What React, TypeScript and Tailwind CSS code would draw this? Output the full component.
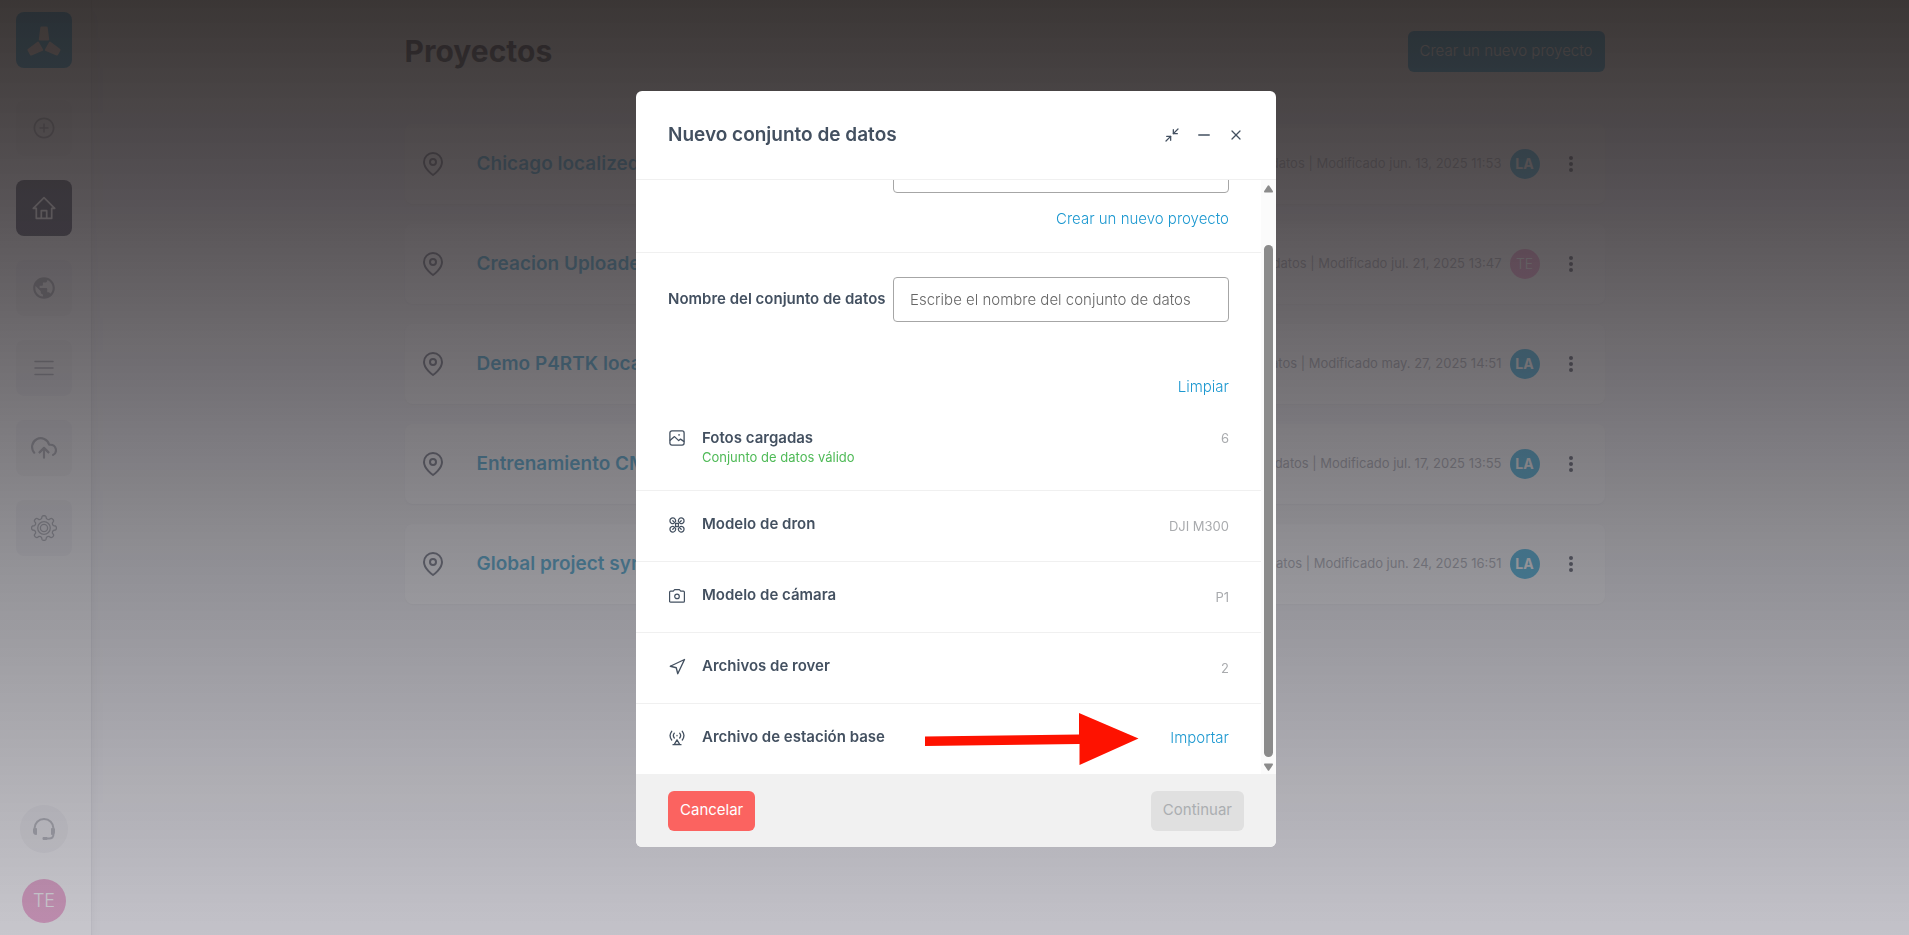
import type { ReactNode } from "react";
import { Minimize2, Minus, X } from "lucide-react";
import { AiOutlinePlusCircle } from "react-icons/ai";
import { FiMapPin, FiNavigation, FiUploadCloud } from "react-icons/fi";
import { MdPublic } from "react-icons/md";

const projects = [
  { name: "Chicago localized", date: "jun. 13, 2025 11:53", user: "LA" },
  { name: "Creacion Uploader", date: "jul. 21, 2025 13:47", user: "TE" },
  { name: "Demo P4RTK localized", date: "may. 27, 2025 14:51", user: "LA" },
  { name: "Entrenamiento CM", date: "jul. 17, 2025 13:55", user: "LA" },
  { name: "Global project sync", date: "jun. 24, 2025 16:51", user: "LA" },
];

// eight rounded teeth around a 13,13 centre
const gearPath =
  Array.from({ length: 8 }, (_, i) => {
    const at = (deg: number, r: number) => {
      const a = ((i * 45 + deg - 90) * Math.PI) / 180;
      return `${(13 + r * Math.cos(a)).toFixed(2)} ${(13 + r * Math.sin(a)).toFixed(2)}`;
    };
    return `${i === 0 ? "M" : "L"}${at(-14, 9.8)} L${at(-10, 11.6)} Q${at(-8, 12.5)} ${at(0, 12.4)} Q${at(8, 12.5)} ${at(10, 11.6)} L${at(14, 9.8)} Q${at(22.5, 8.8)} ${at(31, 9.8)}`;
  }).join(" ") + "Z";

function Logo() {
  const blade = "M13.500.5h5q1 0 1.200 1l1.500 12q0 1-1 1h-8.400q-1 0-1-1l1.500-12q.2-1 1.200-1Z";
  return (
    <svg width="32" height="28" viewBox="0 0 32 28" fill="#f3dfd6" overflow="visible" aria-hidden="true">
      <path d={blade} />
      <path d={blade} transform="rotate(120 16 18)" />
      <path d={blade} transform="rotate(240 16 18)" />
    </svg>
  );
}

function HomeIcon() {
  return (
    <svg width="24" height="24" viewBox="0 0 24 24" fill="none" stroke="currentColor" strokeWidth="1.700" strokeLinejoin="round" aria-hidden="true">
      <path d="M12 1.700 1.300 12.300h3v10h15.400v-10h3Z" />
      <path d="M9.300 22.300v-7.600h5.400v7.600" />
    </svg>
  );
}

function ListIcon() {
  return (
    <svg width="20" height="16" viewBox="0 0 20 16" fill="none" stroke="currentColor" strokeWidth="1.500" strokeLinecap="round" aria-hidden="true">
      <path d="M1 1.500h18M1 8h18M1 14.500h18" />
    </svg>
  );
}

function GearIcon() {
  return (
    <svg width="26" height="26" viewBox="0 0 26 26" fill="none" stroke="currentColor" strokeWidth="1.300" strokeLinejoin="round" aria-hidden="true">
      <path d={gearPath} />
      <circle cx="13" cy="13" r="6.300" />
      <circle cx="13" cy="13" r="3.600" />
    </svg>
  );
}

function HeadsetIcon() {
  return (
    <svg width="24" height="24" viewBox="0 0 24 24" fill="none" stroke="currentColor" strokeWidth="2" aria-hidden="true">
      <path d="M2.500 14v-2.500a9.500 9.500 0 0 1 19 0V17q0 4.500-4.500 4.500h-3" />
      <path d="M2 11.500h2.500v6H4q-2.500 0-2.500-2.500v-3ZM22 11.500h-2.500v6h.5q2.500 0 2.500-2.500v-3ZM11 20.500h4v2h-4Z" fill="currentColor" strokeWidth="1" />
    </svg>
  );
}

function PhotoIcon() {
  return (
    <svg width="16" height="16" viewBox="0 0 16 16" fill="none" stroke="currentColor" strokeWidth="1.300" strokeLinecap="round" strokeLinejoin="round" aria-hidden="true">
      <rect x="0.900" y="0.900" width="14.200" height="14.200" rx="2" />
      <path d="m1.200 10.200 4.300-3.600 4.200 4 1.800-1.500 3.300 2.300" />
      <path d="M9.700 4.900h.8" />
    </svg>
  );
}

function DroneIcon() {
  return (
    <svg width="16" height="16" viewBox="0 0 16 16" fill="none" stroke="currentColor" strokeWidth="1.300" strokeLinecap="round" strokeLinejoin="round" aria-hidden="true">
      <path d="M6.500 4.700A2.850 2.850 0 1 0 4.700 6.500M9.500 4.700A2.850 2.850 0 1 1 11.300 6.500M6.500 11.300A2.850 2.850 0 1 1 4.700 9.500M9.500 11.300A2.850 2.850 0 1 0 11.300 9.500" />
      <path d="m3.800 3.800 2.600 2.600h3.200l2.600-2.600M3.800 12.200l2.600-2.600h3.200l2.600 2.600M6.400 6.400q.6 1.600 0 3.200M9.600 6.400q-.6 1.600 0 3.200" />
    </svg>
  );
}

function CameraIcon() {
  return (
    <svg width="16" height="16" viewBox="0 0 16 16" fill="none" stroke="currentColor" strokeWidth="1.200" strokeLinejoin="round" aria-hidden="true">
      <path d="M1.600 3.200h2.700L5.600 1.700h4.800l1.300 1.500h2.700q1 0 1 1v9q0 1-1 1H1.600q-1 0-1-1v-9q0-1 1-1Z" />
      <circle cx="8" cy="8.400" r="2.300" />
    </svg>
  );
}

function AntennaIcon() {
  return (
    <svg width="16" height="16" viewBox="0 0 16 16" fill="none" stroke="currentColor" strokeWidth="1.300" strokeLinecap="round" strokeLinejoin="round" aria-hidden="true">
      <path d="M2.700 1.300Q-.6 5.500 2.700 10M5.300 3.200Q3.400 5.600 5.300 8M13.300 1.300q3.300 4.200 0 8.700M10.700 3.200q1.900 2.400 0 4.800" />
      <path d="M8 5.500v.3M8 9.800l-2.800 4.700h5.600ZM4 14.700h8" />
    </svg>
  );
}

function SideButton({ label, active, children }: { label: string; active?: boolean; children: ReactNode }) {
  return (
    <button
      type="button"
      aria-label={label}
      className={`flex size-14 items-center justify-center rounded-lg ${active ? "bg-[#1b2036] text-white" : "bg-[#f3f3f5] text-[#94979e]"}`}
    >
      {children}
    </button>
  );
}

function Sidebar() {
  return (
    <aside className="z-10 flex w-[92px] shrink-0 flex-col items-center border-r border-[#e2e2e6] bg-white pt-3 pr-[3px] pb-3 shadow-lg">
      <a href="#" aria-label="Inicio" className="mb-8 flex size-14 items-center justify-center rounded-lg bg-[#0f96d4]">
        <Logo />
      </a>
      <nav className="flex flex-col gap-6">
        <SideButton label="Crear">
          <AiOutlinePlusCircle size={24} />
        </SideButton>
        <SideButton label="Proyectos" active>
          <HomeIcon />
        </SideButton>
        <SideButton label="Mapa">
          <MdPublic size={26} />
        </SideButton>
        <SideButton label="Lista">
          <ListIcon />
        </SideButton>
        <SideButton label="Subir">
          <FiUploadCloud size={26} />
        </SideButton>
        <SideButton label="Ajustes">
          <GearIcon />
        </SideButton>
      </nav>
      <button type="button" aria-label="Soporte" className="mt-auto flex size-12 items-center justify-center rounded-full bg-[#f3f3f5] text-[#a4a6ac]">
        <HeadsetIcon />
      </button>
      <button type="button" className="mt-[26px] size-11 rounded-full bg-[#ea8cc2] text-lg font-light text-white">
        TE
      </button>
    </aside>
  );
}

function Projects() {
  return (
    <main className="flex-1 bg-[#f7f7f9] pt-[31px] pl-2">
      <div className="mx-auto max-w-[1200px]">
        <header className="mb-[52px] flex h-[41px] items-center justify-between">
          <h1 className="text-[30px] font-bold text-[#1e1f2d]">Proyectos</h1>
          <button type="button" className="h-full rounded-md bg-[#0f96d4] px-3 text-[15px] font-light text-white">
            Crear un nuevo proyecto
          </button>
        </header>
        <ul className="flex flex-col gap-5">
          {projects.map((p) => (
            <li key={p.name} className="flex h-20 items-center rounded-lg bg-white pr-6 pl-4 shadow-xs">
              <FiMapPin size={24} className="text-[#4a4f5e]" />
              <a href="#" className="ml-8 text-[19px] font-semibold text-[#1795c8]">
                {p.name}
              </a>
              <span className="ml-auto text-[13px] text-[#96989f]">1 conjunto de datos | Modificado {p.date}</span>
              <span
                className={`ml-2 flex size-[30px] items-center justify-center rounded-full text-sm text-white ${p.user === "LA" ? "bg-[#14a0d6] font-bold" : "bg-[#ea8cc2] font-light"}`}
              >
                {p.user}
              </span>
              <button type="button" aria-label="Opciones" className="ml-[21px] flex w-5 flex-col items-center gap-0.5 text-[#2c3140]">
                <span className="size-1 rounded-full bg-current" />
                <span className="size-1 rounded-full bg-current" />
                <span className="size-1 rounded-full bg-current" />
              </button>
            </li>
          ))}
        </ul>
      </div>
    </main>
  );
}

function Row({ icon, title, children }: { icon: ReactNode; title: string; children: ReactNode }) {
  return (
    <div className="relative flex h-[71px] shrink-0 items-center border-t border-[#f0f0f0] px-8 pb-[3px]">
      <div className="flex w-[18px] justify-center">{icon}</div>
      <h3 className="ml-4 text-[15px] font-semibold">{title}</h3>
      <div className="ml-auto">{children}</div>
    </div>
  );
}

function Arrow() {
  return (
    <svg width="214" height="53" viewBox="0 0 214 53" className="absolute top-[9px] left-[289px]" aria-hidden="true">
      <path d="M0 23.500 154 21.500V0l59.500 25.500L154.500 52V31L0 33Z" fill="#fe1200" />
    </svg>
  );
}

function Scrollbar() {
  return (
    <div aria-hidden="true" className="flex w-[15px] shrink-0 flex-col items-center bg-[#fbfbfb] pt-[5px] pb-[3px] text-[#8b8b8b]">
      <svg width="9" height="8" viewBox="0 0 9 8" fill="currentColor">
        <path d="M3.700.8q.8-1 1.600 0L8.800 6q.5 1.200-.5 1.400H.7Q-.3 7.200.2 6Z" />
      </svg>
      <div className="mt-[52px] mb-1.5 w-[9px] flex-1 rounded-full bg-[#8b8b8b]" />
      <svg width="9" height="8" viewBox="0 0 9 8" fill="currentColor">
        <path d="M3.700 7.200q.8 1 1.600 0L8.800 2q.5-1.200-.5-1.400H.7Q-.3.8.2 2Z" />
      </svg>
    </div>
  );
}

function DatasetModal() {
  return (
    <section role="dialog" aria-modal="true" aria-labelledby="modal-title" className="flex w-full max-w-[640px] flex-col overflow-hidden rounded-md bg-white text-[#435060]">
      <header className="flex h-[89px] items-center border-b border-[#f0f0f0] px-8">
        <h2 id="modal-title" className="text-[19px] font-semibold">
          Nuevo conjunto de datos
        </h2>
        <div className="ml-auto flex gap-4">
          <button type="button" aria-label="Contraer" className="flex size-4 items-center justify-center">
            <Minimize2 size={16} strokeWidth={1.9} className="shrink-0" />
          </button>
          <button type="button" aria-label="Minimizar" className="flex size-4 items-center justify-center">
            <Minus size={18} strokeWidth={1.8} className="shrink-0" />
          </button>
          <button type="button" aria-label="Cerrar" className="flex size-4 items-center justify-center">
            <X size={16} strokeWidth={1.9} className="shrink-0" />
          </button>
        </div>
      </header>

      <div className="flex h-[594px]">
        <div className="flex min-w-0 flex-1 flex-col justify-end overflow-hidden">
          <div className="flex shrink-0 flex-col items-end border-b border-[#f0f0f0] px-8 pb-[21px]">
            <select aria-label="Proyecto" className="h-[45px] w-[336px] appearance-none rounded-sm border border-[#a6a6a6] bg-white px-4" />
            <a href="#" className="mt-3.5 text-[15px] leading-6 font-light text-[#1c98d0]">
              Crear un nuevo proyecto
            </a>
          </div>
          <div className="mt-6 flex shrink-0 items-center justify-between px-8">
            <label htmlFor="dataset-name" className="text-[15px] font-semibold whitespace-nowrap">
              Nombre del conjunto de datos
            </label>
            <input
              id="dataset-name"
              type="text"
              placeholder="Escribe el nombre del conjunto de datos"
              className="h-[45px] w-[336px] shrink-0 rounded-sm border border-[#a6a6a6] px-4 text-[15px] font-light placeholder:text-[#666666]"
            />
          </div>
          <div className="mt-[53px] flex shrink-0 justify-end px-8">
            <button type="button" className="text-[15px] leading-6 font-light text-[#1c98d0]">
              Limpiar
            </button>
          </div>
          <div className="flex h-[91px] shrink-0 items-start px-8 pt-[29px]">
            <div className="mt-0.5 flex w-[18px] justify-center">
              <PhotoIcon />
            </div>
            <div className="ml-4">
              <h3 className="text-[15px] leading-5 font-semibold">Fotos cargadas</h3>
              <p className="text-[13px] leading-[18px] text-[#4fba57]">Conjunto de datos válido</p>
            </div>
            <span className="ml-auto text-[13px] leading-5 text-[#a9abae]">6</span>
          </div>
          <Row icon={<DroneIcon />} title="Modelo de dron">
            <span className="text-[13px] text-[#a9abae]">DJI M300</span>
          </Row>
          <Row icon={<CameraIcon />} title="Modelo de cámara">
            <span className="text-[13px] text-[#a9abae]">P1</span>
          </Row>
          <Row icon={<FiNavigation size={18} strokeWidth={1.8} />} title="Archivos de rover">
            <span className="text-[13px] text-[#a9abae]">2</span>
          </Row>
          <Row icon={<AntennaIcon />} title="Archivo de estación base">
            <button type="button" className="text-[15px] font-light text-[#1c98d0]">
              Importar
            </button>
            <Arrow />
          </Row>
        </div>
        <Scrollbar />
      </div>

      <footer className="flex h-[73px] items-center justify-between bg-[#f1f1f1] px-8">
        <button type="button" className="h-10 rounded-md bg-[#fb6360] px-3 text-[15px] text-white">
          Cancelar
        </button>
        <button type="button" disabled className="h-10 rounded-md bg-[#e0e0e0] px-3 text-[15px] text-[#abaeb1]">
          Continuar
        </button>
      </footer>
    </section>
  );
}

export default function App() {
  return (
    <div className="relative flex min-h-screen font-['Inter',sans-serif]">
      <Sidebar />
      <Projects />
      <div className="fixed inset-0 z-20 flex items-center justify-center bg-[linear-gradient(180deg,rgba(42,37,36,0.92)_0%,rgba(62,57,60,0.87)_21%,rgba(92,91,98,0.66)_61%,rgba(144,142,154,0.5)_100%)] pt-[3px] pl-[3px]">
        <DatasetModal />
      </div>
    </div>
  );
}
